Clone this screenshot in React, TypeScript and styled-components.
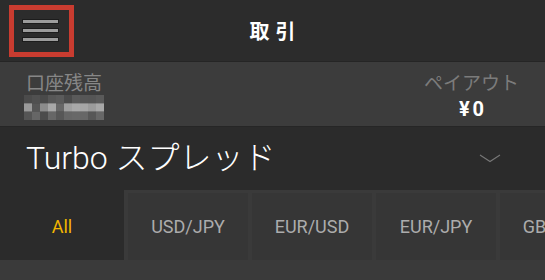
import React from 'react';
import styled, { createGlobalStyle } from 'styled-components';

const LATIN = `Roboto, "Noto Sans CJK JP", sans-serif`;
const CJK = `"Noto Sans CJK JP", Roboto, sans-serif`;

const GlobalStyle = createGlobalStyle`
  html, body {
    margin: 0;
    padding: 0;
    background: #3a3a3a;
  }
  body {
    font-family: ${LATIN};
    overflow: hidden;
  }
`;

// blurred balance, as a 10x3 mosaic
const MOSAIC = [
  ['#4b4b4b', '#505050', '#4a4a4a', '#575757', '#5b5b5b', '#4b4b4b', '#5a5a5a', '#565656', '#555555', '#5a5a5a'],
  ['#9a9a9a', '#565656', '#8c8c8c', '#a8a8a8', '#676767', '#a0a0a0', '#a9a9a9', '#a6a6a6', '#9b9b9b', '#a8a8a8'],
  ['#555555', '#666666', '#4c4c4c', '#676767', '#575757', '#666666', '#686868', '#676767', '#575757', '#676767'],
];

const TABS = ['All', 'USD/JPY', 'EUR/USD', 'EUR/JPY', 'GBP/JPY'];

function Mosaic() {
  return (
    <MosaicSvg width={80} height={25} viewBox="0 0 80 25">
      {MOSAIC.map((row, r) =>
        row.map((c, i) => (
          <rect key={`${r}-${i}`} x={i * 8} y={r * 8.33} width={8} height={8.4} fill={c} />
        ))
      )}
    </MosaicSvg>
  );
}

export default function App() {
  return (
    <>
      <GlobalStyle />
      <Screen>
        <Header>
          <MenuButton aria-label="menu">
            <MenuLine />
            <MenuLine />
            <MenuLine />
          </MenuButton>
          <HeaderTitle>取引</HeaderTitle>
          <span />
        </Header>

        <BalanceBar>
          <BalanceColumn>
            <BalanceLabel>口座残高</BalanceLabel>
            <Mosaic />
          </BalanceColumn>
          <BalanceColumn $center>
            <BalanceLabel $dim>ペイアウト</BalanceLabel>
            <PayoutValue>¥0</PayoutValue>
          </BalanceColumn>
        </BalanceBar>

        <ProductRow>
          <ProductName>Turbo スプレッド</ProductName>
          <svg width="22" height="9" viewBox="0 0 22 9">
            <path d="M1 1 L11 7.5 L21 1" fill="none" stroke="#777777" strokeWidth="1.1" />
          </svg>
        </ProductRow>

        <TabStrip>
          {TABS.map((t, i) => (
            <Tab key={t} $active={i === 0}>
              {t}
            </Tab>
          ))}
        </TabStrip>
      </Screen>
    </>
  );
}

const Screen = styled.div`
  width: 545px;
  height: 280px;
  display: flex;
  flex-direction: column;
  overflow: hidden;
`;

const Header = styled.header`
  height: 61px;
  flex: none;
  display: grid;
  grid-template-columns: 1fr auto 1fr;
  align-items: center;
  background: #2c2c2c;
  border-bottom: 1px solid #252525;
`;

const MenuButton = styled.button`
  width: 65px;
  height: 52px;
  margin-left: 9px;
  box-sizing: border-box;
  border: 5px solid #c93c30;
  background: transparent;
  padding: 0 0 0 9px;
  display: flex;
  flex-direction: column;
  justify-content: center;
  gap: 6px;
`;

const MenuLine = styled.span`
  display: block;
  width: 35px;
  height: 3px;
  background: #9c9c9c;
  box-shadow: 0 0 0 1px #1c1c1c;
`;

const HeaderTitle = styled.h1`
  margin: 0;
  font-family: ${CJK};
  font-size: 20px;
  font-weight: 700;
  color: #ffffff;
  letter-spacing: 6px;
  padding-left: 6px;
  line-height: 24px;
`;

const BalanceBar = styled.section`
  height: 65px;
  flex: none;
  display: flex;
  justify-content: space-between;
  padding: 9px 26px 0 26px;
  box-sizing: border-box;
  background: #3c3c3c;
  border-bottom: 1px solid #262626;
`;

const BalanceColumn = styled.div<{ $center?: boolean }>`
  display: flex;
  flex-direction: column;
  align-items: ${(p) => (p.$center ? 'center' : 'flex-start')};
`;

const BalanceLabel = styled.div<{ $dim?: boolean }>`
  font-family: ${CJK};
  font-size: 19px;
  line-height: 22px;
  color: ${(p) => (p.$dim ? '#7b7b7b' : '#878787')};
`;

const MosaicSvg = styled.svg`
  display: block;
  margin-top: 2px;
  margin-left: -2px;
`;

const PayoutValue = styled.div`
  margin-top: 4px;
  padding-left: 3px;
  font-family: ${LATIN};
  font-size: 20px;
  font-weight: 700;
  line-height: 24px;
  letter-spacing: 3px;
  color: #ffffff;
`;

const ProductRow = styled.div`
  height: 63px;
  flex: none;
  display: flex;
  align-items: center;
  justify-content: space-between;
  padding: 0 44px 0 26px;
  background: #2b2b2b;
`;

const ProductName = styled.div`
  font-family: ${LATIN};
  font-size: 32px;
  font-weight: 300;
  line-height: 63px;
  color: #ffffff;
`;

const TabStrip = styled.nav`
  flex: 1;
  display: flex;
  gap: 4px;
  align-items: flex-start;
  background: #3a3a3a;
  overflow: hidden;
`;

const Tab = styled.div<{ $active?: boolean }>`
  flex: none;
  width: ${(p) => (p.$active ? '124px' : '120px')};
  height: ${(p) => (p.$active ? '70px' : '67px')};
  margin-top: ${(p) => (p.$active ? '0' : '3px')};
  display: flex;
  align-items: center;
  justify-content: center;
  padding-top: ${(p) => (p.$active ? '3px' : '0')};
  box-sizing: border-box;
  background: ${(p) => (p.$active ? '#2b2b2b' : '#363636')};
  color: ${(p) => (p.$active ? '#f2b600' : '#acacac')};
  font-family: ${LATIN};
  font-size: 18px;
`;
